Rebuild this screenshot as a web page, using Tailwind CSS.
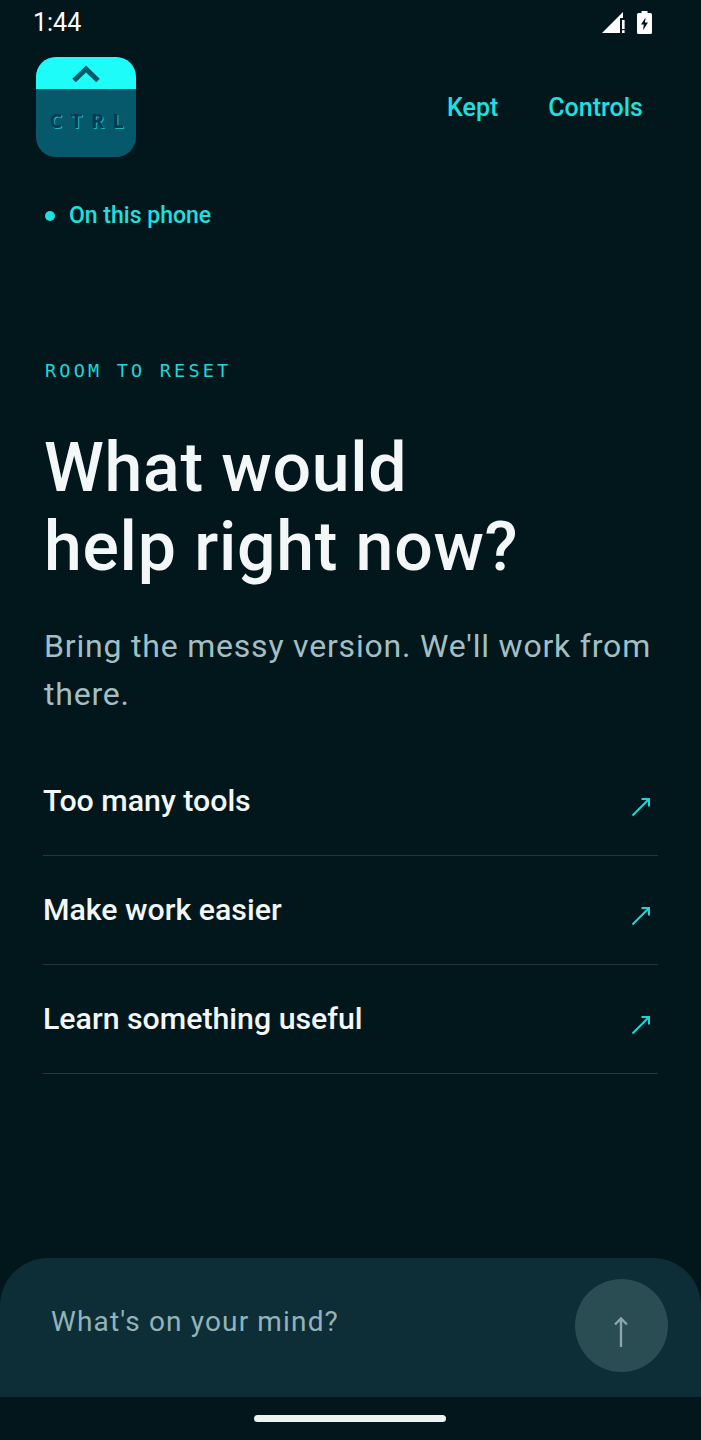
<!DOCTYPE html>
<html lang="en">
<head>
<meta charset="utf-8">
<script src="https://cdn.jsdelivr.net/npm/@tailwindcss/browser@4"></script>
<title>CTRL</title>
</head>
<body class="bg-[#02171c] font-['Roboto',sans-serif]">
<div class="flex h-[1440px] w-[701px] flex-col overflow-hidden">

  <!-- status bar -->
  <div class="flex h-[44px] items-center justify-between pl-[33px] pr-[49px] text-white">
    <span class="pt-[1px] text-[25px] leading-[44px]">1:44</span>
    <div class="flex items-center gap-[12px]">
      <svg width="23" height="23" viewBox="0 0 23 23" fill="#fff">
        <path d="M0 22 L21 1 V7 H18 V22 Z"/>
        <rect x="20" y="9" width="2.6" height="9"/>
        <rect x="20" y="19.2" width="2.6" height="2.8"/>
      </svg>
      <svg width="15" height="23" viewBox="0 0 15 23">
        <path fill="#fff" d="M4.5 0h6v2h3A1.5 1.5 0 0 1 15 3.5v18a1.5 1.5 0 0 1-1.5 1.5h-12A1.5 1.5 0 0 1 0 21.5v-18A1.5 1.5 0 0 1 1.5 2h3z"/>
        <path fill="#02171c" d="M8.6 6.5 L4 13.6 H6.8 L6 19.2 L11 11.6 H8 Z"/>
      </svg>
    </div>
  </div>

  <!-- header -->
  <div class="mt-[13px] flex items-center justify-between pl-[36px] pr-[58px]">
    <div class="flex h-[100px] w-[100px] flex-col overflow-hidden rounded-[20px] bg-[#05596a]">
      <div class="flex h-[32px] items-center justify-center bg-[#1dfcf8]">
        <svg width="28" height="18" viewBox="0 0 28 18" fill="none" stroke="#05596a" stroke-width="5"><path d="M2 16.5 L14 5 L26 16.5"/></svg>
      </div>
      <div class="flex flex-1 items-center justify-center pb-[5px] pl-[10px] font-['Open_Sans',sans-serif] text-[20px] font-bold leading-none tracking-[8.5px] text-[#053a55] [text-shadow:1px_1px_0_#22b4bd]">CTRL</div>
    </div>
    <nav class="flex gap-[50px] pt-[2px] text-[25px] font-medium text-[#1fe0e0]">
      <span>Kept</span>
      <span>Controls</span>
    </nav>
  </div>

  <!-- on device -->
  <div class="mt-[44px] flex items-center gap-[14px] pl-[45px] text-[23px] font-medium leading-[30px] text-[#1fe0e0]">
    <span class="h-[10px] w-[10px] rounded-full bg-[#1fe0e0]"></span>
    <span>On this phone</span>
  </div>

  <!-- hero -->
  <p class="mt-[128px] pl-[45px] font-['DejaVu_Sans_Mono',monospace] text-[18.5px] leading-[24px] tracking-[3.2px] text-[#1fd6d8]">ROOM TO RESET</p>
  <h1 class="mt-[46px] pl-[44px] text-[68px] font-medium leading-[79px] tracking-[0.7px] text-[#f3f7f8]">What would<br>help right now?</h1>
  <p class="mt-[35px] pl-[44px] pr-[40px] text-[32px] leading-[48px] tracking-[0.8px] text-[#a3bfc4]">Bring the messy version. We'll work from there.</p>

  <!-- suggestions -->
  <div class="mt-[29px] px-[43px]">
    <div class="flex h-[109px] items-center justify-between border-b border-[#1c3a40] pr-[7px] text-[30.3px] font-medium text-[#f3f7f8]">
      <span>Too many tools</span>
      <svg class="mt-[11px]" width="20" height="20" viewBox="0 0 20 20" fill="none" stroke="#1cd6d6" stroke-width="2"><path d="M1.5 18.5 L18 2 M10.5 2 H18 V9.5"/></svg>
    </div>
    <div class="flex h-[109px] items-center justify-between border-b border-[#1c3a40] pr-[7px] text-[30.3px] font-medium text-[#f3f7f8]">
      <span>Make work easier</span>
      <svg class="mt-[11px]" width="20" height="20" viewBox="0 0 20 20" fill="none" stroke="#1cd6d6" stroke-width="2"><path d="M1.5 18.5 L18 2 M10.5 2 H18 V9.5"/></svg>
    </div>
    <div class="flex h-[109px] items-center justify-between border-b border-[#1c3a40] pr-[7px] text-[30.3px] font-medium text-[#f3f7f8]">
      <span>Learn something useful</span>
      <svg class="mt-[11px]" width="20" height="20" viewBox="0 0 20 20" fill="none" stroke="#1cd6d6" stroke-width="2"><path d="M1.5 18.5 L18 2 M10.5 2 H18 V9.5"/></svg>
    </div>
  </div>

  <!-- composer -->
  <div class="mt-auto flex h-[139px] items-center justify-between rounded-t-[48px] bg-[#0d2e37] pb-[4px] pl-[51px] pr-[33px]">
    <span class="mb-[8px] text-[28px] tracking-[1.15px] text-[#94b3b8]">What's on your mind?</span>
    <div class="flex h-[93px] w-[93px] items-center justify-center rounded-full bg-[#2a4c53] pr-[1px]">
      <svg class="mt-[11px]" width="14" height="31" viewBox="0 0 14 31" fill="none" stroke="#8aa6ab" stroke-width="2.4"><path d="M7 31 V2 M1 8.5 L7 2.5 L13 8.5"/></svg>
    </div>
  </div>

  <!-- gesture bar -->
  <div class="flex h-[43px] items-end justify-center bg-[#02161b] pb-[18px] pr-[2px]">
    <div class="h-[7px] w-[192px] rounded-full bg-[#eef2f1]"></div>
  </div>
</div>
</body>
</html>
